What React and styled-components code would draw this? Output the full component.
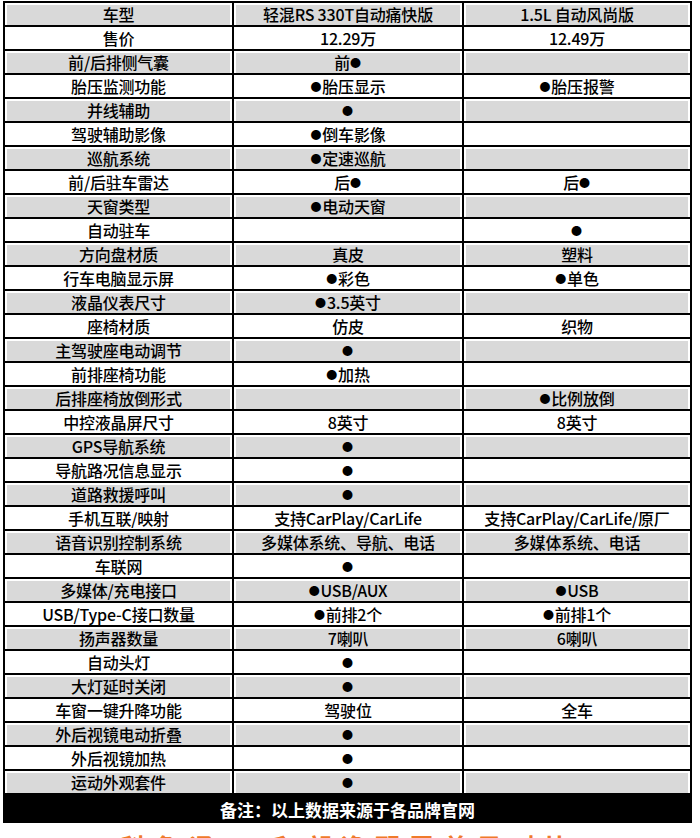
import React from 'react'
import styled, { createGlobalStyle } from 'styled-components'

const GlobalStyle = createGlobalStyle`
  html, body {
    margin: 0;
    padding: 0;
    background: #fff;
  }
  body {
    font-family: "Noto Sans CJK SC", "Noto Sans", sans-serif;
    color: #000;
  }
`

// rows: label, RS 330T, Lavida 1.5L
const rows = [
    ['车型', '轻混RS 330T自动痛快版', '1.5L 自动风尚版'],
    ['售价', '12.29万', '12.49万'],
    ['前/后排侧气囊', '前●', ''],
    ['胎压监测功能', '●胎压显示', '●胎压报警'],
    ['并线辅助', '●', ''],
    ['驾驶辅助影像', '●倒车影像', ''],
    ['巡航系统', '●定速巡航', ''],
    ['前/后驻车雷达', '后●', '后●'],
    ['天窗类型', '●电动天窗', ''],
    ['自动驻车', '', '●'],
    ['方向盘材质', '真皮', '塑料'],
    ['行车电脑显示屏', '●彩色', '●单色'],
    ['液晶仪表尺寸', '●3.5英寸', ''],
    ['座椅材质', '仿皮', '织物'],
    ['主驾驶座电动调节', '●', ''],
    ['前排座椅功能', '●加热', ''],
    ['后排座椅放倒形式', '', '●比例放倒'],
    ['中控液晶屏尺寸', '8英寸', '8英寸'],
    ['GPS导航系统', '●', ''],
    ['导航路况信息显示', '●', ''],
    ['道路救援呼叫', '●', ''],
    ['手机互联/映射', '支持CarPlay/CarLife', '支持CarPlay/CarLife/原厂'],
    ['语音识别控制系统', '多媒体系统、导航、电话', '多媒体系统、电话'],
    ['车联网', '●', ''],
    ['多媒体/充电接口', '●USB/AUX', '●USB'],
    ['USB/Type-C接口数量', '●前排2个', '●前排1个'],
    ['扬声器数量', '7喇叭', '6喇叭'],
    ['自动头灯', '●', ''],
    ['大灯延时关闭', '●', ''],
    ['车窗一键升降功能', '驾驶位', '全车'],
    ['外后视镜电动折叠', '●', ''],
    ['外后视镜加热', '●', ''],
    ['运动外观套件', '●', ''],
]

// the ● in the picture is a lot smaller than the cjk font's one
const withDots = text => text.split(/(●)/).map((part, k) =>
    part === '●' ? <Dot key={k}>●</Dot> : part
)

export default function App() {
    return (
        <>
            <GlobalStyle />
            <Page>
                <Table>
                    {rows.map((r, i) => (
                        <Row key={i}>
                            {r.map((text, j) => (
                                <Cell key={j} $shaded={i % 2 === 0} $first={j === 0}>{withDots(text)}</Cell>
                            ))}
                        </Row>
                    ))}
                    <Footer>备注：以上数据来源于各品牌官网</Footer>
                </Table>
                <Title>科鲁泽RS和朗逸配置差异对比</Title>
            </Page>
        </>
    )
}

const Page = styled.div`
width: 700px;
padding-top: 1px;
`

const Table = styled.div`
margin-left: 3px;
width: 689px;
box-sizing: border-box;
border: 2px solid #000;
border-bottom: none;
`

const Row = styled.div`
display: grid;
grid-template-columns: 227px 230px 228px;
height: 24px;
box-sizing: border-box;
border-bottom: 2px solid #000;
`

const Cell = styled.div`
box-sizing: border-box;
border-left: ${p => (p.$first ? 'none' : '2px solid #000')};
background: ${p => (p.$shaded ? '#d9d9d9' : '#fff')};
box-shadow: ${p => (p.$shaded ? 'inset 2px 2px 0 #fff, inset -2px 0 0 #fff' : 'none')};
display: flex;
align-items: center;
justify-content: center;
font-size: 16px;
font-weight: 500;
line-height: 22px;
white-space: nowrap;
overflow: hidden;
letter-spacing: -0.2px;
`

const Dot = styled.span`
font-size: 11px;
line-height: 1;
margin-right: 1px;
`

const Footer = styled.div`
height: 28px;
background: #000;
color: #fff;
display: flex;
align-items: center;
justify-content: center;
font-size: 17px;
font-weight: 700;
`

const Title = styled.div`
margin-top: 6px;
text-align: center;
color: #f07a2a;
font-size: 25px;
font-weight: 700;
letter-spacing: 9px;
line-height: 34px;
`
